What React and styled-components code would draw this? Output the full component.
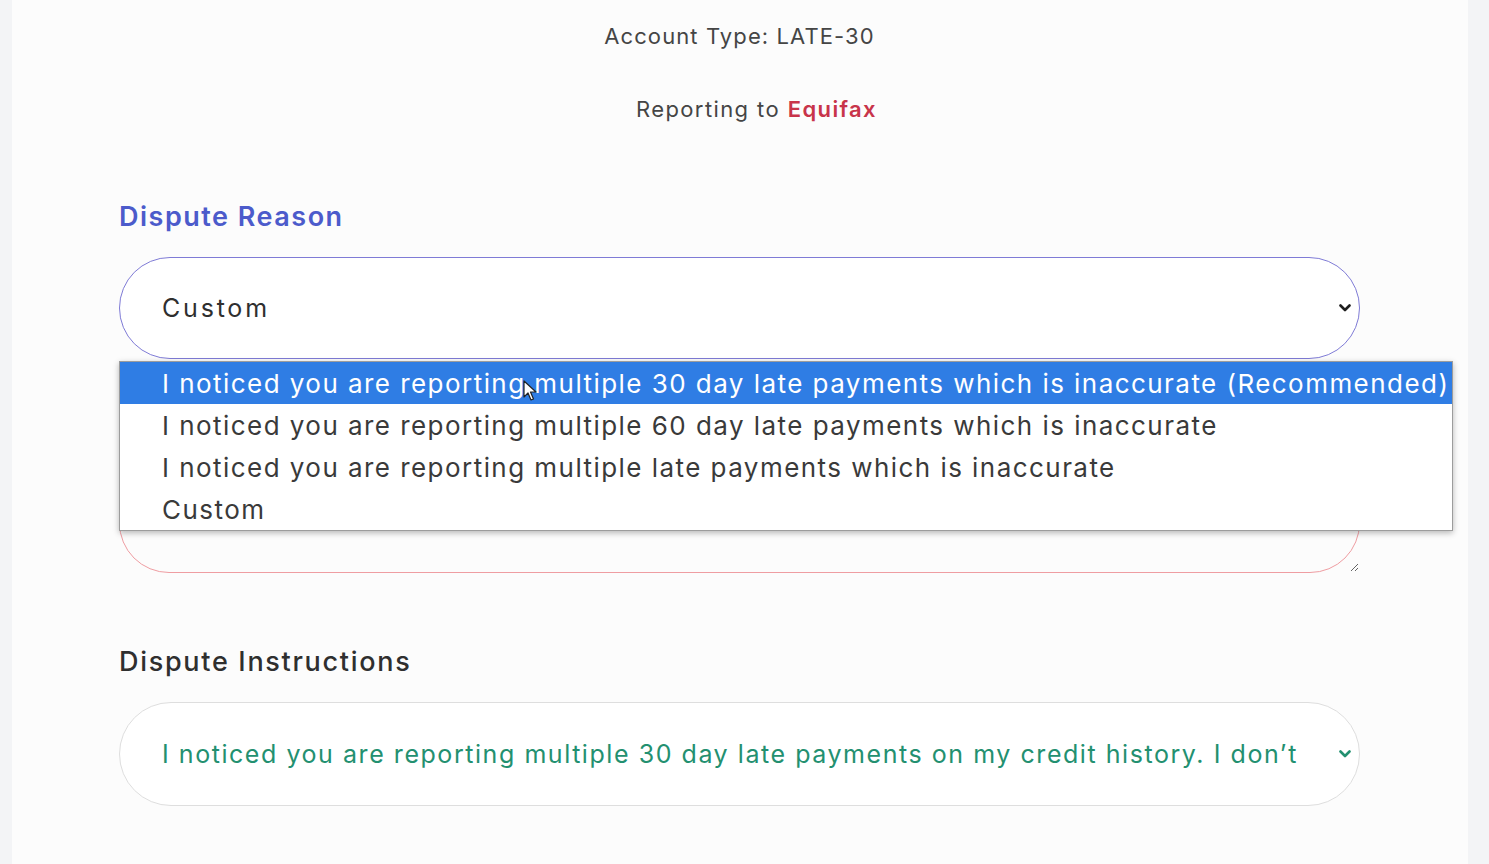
import React from 'react';
import styled, { createGlobalStyle } from 'styled-components';

const GlobalStyle = createGlobalStyle`
  html, body { margin: 0; padding: 0; background: #f3f4f6; }
  body { font-family: Inter, "Noto Sans", sans-serif; }
  * { box-sizing: border-box; }
`;

const Page = styled.div`
  display: flex;
  height: 864px;
  padding: 0 21px 0 12px;
  overflow: hidden;
`;

const Panel = styled.main`
  flex: 1;
  background: #fcfcfc;
  padding: 20px 108px 0 107px;
  display: flex;
  flex-direction: column;
`;

const Meta = styled.p`
  margin: 0;
  margin-top: ${p => p.$top || 0}px;
  padding-left: ${p => p.$shift || 0}px;
  text-align: center;
  font-size: 22px;
  line-height: 32px;
  letter-spacing: ${p => p.$ls || 1}px;
  color: #454545;
`;

const Bureau = styled.span`
  color: #c8344a;
  font-weight: 600;
`;

const Label = styled.h2`
  margin: ${p => p.$top}px 0 22px;
  font-size: 27px;
  line-height: 36px;
  letter-spacing: ${p => (p.$accent ? 1.5 : 1.7)}px;
  font-weight: ${p => (p.$accent ? 600 : 500)};
  color: ${p => (p.$accent ? '#4c5bcb' : '#2f2f2f')};
`;

const Field = styled.div`
  position: relative;
`;

const SelectBox = styled.div`
  height: ${p => p.$h}px;
  border: 1px solid ${p => p.$border};
  border-radius: 52px;
  background: #fff;
  display: flex;
  align-items: center;
  padding: 0 8px 0 42px;
  gap: 20px;
  font-size: 25px;
  letter-spacing: ${p => p.$ls}px;
  color: ${p => p.$color};
`;

const SelectText = styled.span`
  flex: 1;
  white-space: nowrap;
  overflow: hidden;
`;

const Chevron = ({ color }) => (
  <svg width="12" height="8" viewBox="0 0 12 8">
    <polyline points="1.5,1.5 6,6 10.5,1.5" fill="none" stroke={color} strokeWidth="2.6" strokeLinecap="round" strokeLinejoin="round" />
  </svg>
);

const Notes = styled.textarea`
  display: block;
  width: 100%;
  height: 184px;
  margin-top: 30px;
  border: 1px solid #ef9da2;
  border-radius: 50px;
  background: #fcfcfc;
  resize: vertical;
  outline: none;
`;

const Menu = styled.ul`
  position: absolute;
  top: 104px;
  left: 0;
  width: 1334px;
  margin: 0;
  padding: 0;
  list-style: none;
  background: #fff;
  border: 1px solid #9c9c9c;
  box-shadow: 0 2px 6px rgba(0, 0, 0, 0.28);
  z-index: 2;
`;

const Option = styled.li`
  height: 42px;
  display: flex;
  align-items: center;
  padding-left: 42px;
  font-size: 26px;
  letter-spacing: 1.45px;
  white-space: nowrap;
  overflow: hidden;
  color: ${p => (p.$active ? '#fff' : '#3a3a3a')};
  background: ${p => (p.$active ? '#2f7de4' : 'transparent')};
`;

const Pointer = styled.svg`
  position: absolute;
  left: 403px;
  top: 18px;
`;

const options = [
  'I noticed you are reporting multiple 30 day late payments which is inaccurate (Recommended)',
  'I noticed you are reporting multiple 60 day late payments which is inaccurate',
  'I noticed you are reporting multiple late payments which is inaccurate',
  'Custom',
];

export default function App() {
  return (
    <>
      <GlobalStyle />
      <Page>
        <Panel>
          <Meta $ls={1.1}>Account Type: LATE-30</Meta>
          <Meta $top={41} $shift={34} $ls={1.4}>
            Reporting to <Bureau>Equifax</Bureau>
          </Meta>

          <Label $accent $top={74}>Dispute Reason</Label>
          <Field>
            <SelectBox $h={102} $border="#7f7bd6" $color="#2f2f2f" $ls={2.8}>
              <SelectText>Custom</SelectText>
              <Chevron color="#1f1f1f" />
            </SelectBox>
            <Menu>
              {options.map((o, i) => (
                <Option key={o} $active={i === 0}>{o}</Option>
              ))}
              <Pointer width="14" height="22" viewBox="0 0 14 22">
                <path d="M1 1 L1 17 L5 13 L8 20 L10.5 19 L7.5 12 L13 12 Z" fill="#fff" stroke="#222" strokeWidth="1.2" strokeLinejoin="round" />
              </Pointer>
            </Menu>
            <Notes readOnly />
          </Field>

          <Label $top={71}>Dispute Instructions</Label>
          <SelectBox $h={104} $border="#dedede" $color="#239070" $ls={1.55}>
            <SelectText>I noticed you are reporting multiple 30 day late payments on my credit history. I don’t</SelectText>
            <Chevron color="#239070" />
          </SelectBox>
        </Panel>
      </Page>
    </>
  );
}
